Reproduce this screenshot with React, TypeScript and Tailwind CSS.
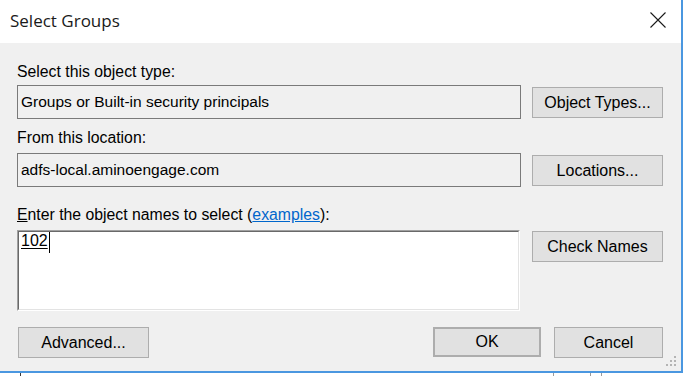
const sans = "font-['Liberation_Sans',Arial,sans-serif]";

function WinButton({ label, className = '' }: { label: string; className?: string }) {
  return (
    <div
      className={`flex items-center justify-center bg-[#e1e1e1] border border-[#adadad] text-black text-[16px] ${className}`}
    >
      {label}
    </div>
  );
}

function ReadOnlyBox({ value }: { value: string }) {
  return (
    <div className="w-[504px] h-[34px] border border-[#7a7a7a] bg-[#f0f0f0] pl-[3px] flex items-center">
      <span>{value}</span>
    </div>
  );
}

function Grip() {
  const dots = [
    [8, 0],
    [4, 4],
    [8, 4],
    [0, 8],
    [4, 8],
    [8, 8],
  ];
  return (
    <div className="absolute right-[4px] bottom-[4px] w-[11px] h-[11px]">
      {dots.map(([x, y], i) => (
        <span
          key={i}
          className="absolute w-[2px] h-[2px] bg-[#b4b4b4]"
          style={{ left: x, top: y }}
        />
      ))}
    </div>
  );
}

export default function App() {
  return (
    <div className="w-[685px] h-[376px] bg-white overflow-hidden">
      <div className="w-[683px] h-[373px] border-r-2 border-b-2 border-[#4a97e0] flex flex-col">
        {/* title bar */}
        <div className="h-[43px] shrink-0 bg-white flex items-center justify-between pl-[10px] pr-[15px]">
          <span className="font-['Open_Sans',sans-serif] text-[17px] leading-[20px] text-[#1a1a1a] mb-[2px]">
            Select Groups
          </span>
          <svg width="16" height="16" viewBox="0 0 16 16" className="mb-[4px]">
            <path d="M0.5 0.5 L15.5 15.5 M15.5 0.5 L0.5 15.5" stroke="#1a1a1a" strokeWidth="1.1" />
          </svg>
        </div>

        {/* body */}
        <div
          className={`relative flex-1 bg-[#f0f0f0] pl-[17px] pr-[18px] pt-[20px] text-[15.5px] leading-[18px] text-black ${sans}`}
        >
          <div className="h-[18px] text-[15.8px]">Select this object type:</div>
          <div className="mt-[4px] flex items-start gap-[11px]">
            <ReadOnlyBox value="Groups or Built-in security principals" />
            <WinButton label="Object Types..." className="mt-[2px] w-[131px] h-[31px]" />
          </div>

          <div className="mt-[10px] h-[18px] text-[15.8px]">From this location:</div>
          <div className="mt-[6px] flex items-start gap-[11px]">
            <ReadOnlyBox value="adfs-local.aminoengage.com" />
            <WinButton label="Locations..." className="mt-[2px] w-[131px] h-[31px]" />
          </div>

          <div className="mt-[19px] h-[18px] text-[15.8px]">
            <span className="underline">E</span>nter the object names to select (
            <span className="text-[#0066cc] underline">examples</span>):
          </div>
          <div className="mt-[6px] flex items-start gap-[12px]">
            <div className="w-[503px] h-[81px] border-t border-l border-t-[#a0a0a0] border-l-[#a0a0a0] border-b border-r border-b-[#ffffff] border-r-[#ffffff]">
              <div className="w-full h-full bg-white border-t border-l border-t-[#696969] border-l-[#696969] border-b border-r border-b-[#e3e3e3] border-r-[#e3e3e3] pl-[2px] flex items-start">
                <span className="text-[16px] underline decoration-1 underline-offset-[2px]">102</span>
                <span className="ml-[1px] w-px h-[21px] bg-black" />
              </div>
            </div>
            <WinButton label="Check Names" className="mt-[1px] w-[131px] h-[31px]" />
          </div>

          <div className="mt-[16px] flex items-start">
            <WinButton label="Advanced..." className="ml-[1px] w-[131px] h-[31px]" />
            <div className="flex-1" />
            <WinButton
              label="OK"
              className="w-[108px] h-[30px] border-2 border-[#0078d7]"
            />
            <WinButton label="Cancel" className="ml-[13px] w-[109px] h-[31px]" />
          </div>

          <Grip />
        </div>
      </div>

      {/* strip of the window behind */}
      <div className="h-[3px] flex">
        <span className="ml-[20px] w-px h-full bg-[#3a3a3a]" />
        <span className="ml-[532px] w-px h-full bg-[#9a9a9a]" />
        <span className="ml-[36px] w-px h-full bg-[#9a9a9a]" />
        <span className="ml-[10px] w-px h-full bg-[#9a9a9a]" />
      </div>
    </div>
  );
}
